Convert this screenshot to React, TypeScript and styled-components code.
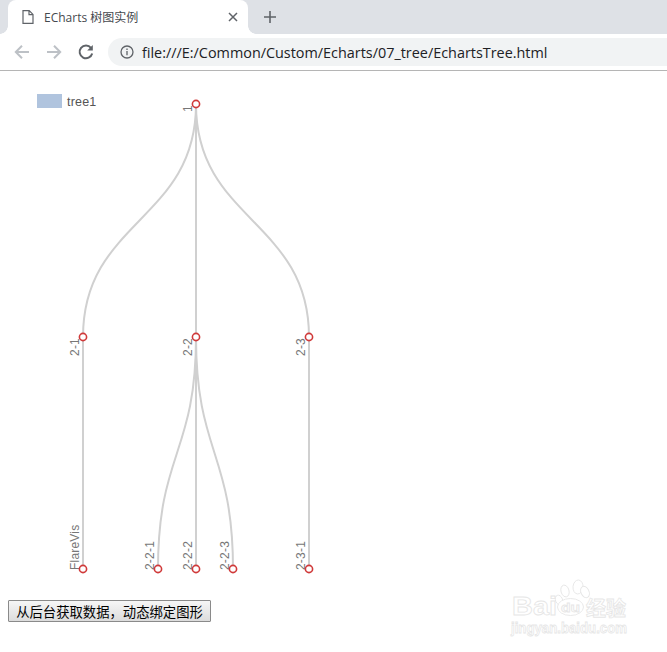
import styled, { createGlobalStyle } from "styled-components"

const GlobalStyle = createGlobalStyle`
    html, body {
        margin: 0;
        padding: 0;
        background: #fff;
        overflow: hidden;
    }
`

const tabFont = `"Open Sans", "Noto Sans CJK SC", sans-serif`

const Window = styled.div`
    position: relative;
    width: 667px;
    height: 652px;
    overflow: hidden;
    background: #fff;
`

const TabStrip = styled.div`
    display: flex;
    align-items: flex-end;
    height: 34px;
    padding-left: 8px;
    background: #dee1e6;
`

const Tab = styled.div`
    position: relative;
    display: flex;
    align-items: center;
    width: 240px;
    height: 34px;
    box-sizing: border-box;
    padding: 0 10px 0 14px;
    background: #fff;
    border-radius: 8px 8px 0 0;

    &::before,
    &::after {
        content: "";
        position: absolute;
        bottom: 0;
        width: 8px;
        height: 8px;
    }

    &::before {
        left: -8px;
        background: radial-gradient(circle at 0 0, #dee1e6 7.5px, #fff 8px);
    }

    &::after {
        right: -8px;
        background: radial-gradient(circle at 100% 0, #dee1e6 7.5px, #fff 8px);
    }
`

const TabTitle = styled.span`
    flex: 1;
    margin-left: 10px;
    font: 12px ${tabFont};
    color: #45494e;
`

const NewTab = styled.button`
    display: flex;
    padding: 0;
    margin: 0 0 11px 16px;
    border: 0;
    background: none;
`

const Toolbar = styled.div`
    display: flex;
    align-items: center;
    height: 37px;
    box-sizing: border-box;
    padding: 0 0 0 13px;
    gap: 14px;
    background: #fff;
    border-bottom: 1px solid #b5b5b5;
`

const NavButton = styled.span`
    display: flex;
    width: 18px;
    height: 18px;
`

const AddressBar = styled.div`
    display: flex;
    flex: 1;
    align-items: center;
    height: 28px;
    margin-left: -1px;
    padding-left: 12px;
    gap: 8px;
    background: #f1f3f4;
    border-radius: 14px 0 0 14px;
`

const Url = styled.span`
    font: 14.4px ${tabFont};
    color: #202124;
`

const Page = styled.main`
    display: flex;
    flex-direction: column;
    align-items: flex-start;
`

const Chart = styled.svg`
    display: block;
    width: 667px;
    height: 529px;
`

const NodeLabel = styled.text`
    font: 12px "Liberation Sans", sans-serif;
    letter-spacing: 0.2px;
    fill: #777;
`

const LegendLabel = styled.text`
    font: 12.5px "Liberation Sans", sans-serif;
    letter-spacing: 0.2px;
    fill: #555;
`

const ActionButton = styled.button`
    width: 203px;
    height: 22px;
    margin-left: 8px;
    padding: 0;
    font: 13.33px "Noto Sans CJK SC", sans-serif;
    color: #000;
    background: linear-gradient(#f6f6f6, #dcdcdc);
    border: 1px solid #8a8a8a;
    border-radius: 1px;
    white-space: nowrap;
`

const Watermark = styled.svg`
    position: absolute;
    left: 505px;
    top: 576px;
    width: 150px;
    height: 70px;
`

const WatermarkText = styled.text`
    font-family: "Liberation Sans", "Noto Sans CJK SC", sans-serif;
    fill: #fff;
    stroke: #e6e6e6;
    stroke-width: 0.8px;
`

type TreeNode = { x: number; y: number; label: string; leaf?: boolean }

// node centres in chart coordinates (chart starts 71px from the top)
const nodes: TreeNode[] = [
    { x: 196, y: 33, label: "1" },
    { x: 83, y: 266, label: "2-1" },
    { x: 196, y: 266, label: "2-2" },
    { x: 309, y: 266, label: "2-3" },
    { x: 83, y: 498, label: "FlareVis", leaf: true },
    { x: 158, y: 498, label: "2-2-1", leaf: true },
    { x: 196, y: 498, label: "2-2-2", leaf: true },
    { x: 233, y: 498, label: "2-2-3", leaf: true },
    { x: 309, y: 498, label: "2-3-1", leaf: true }
]

const links: [number, number][] = [
    [0, 1],
    [0, 2],
    [0, 3],
    [1, 4],
    [2, 5],
    [2, 6],
    [2, 7],
    [3, 8]
]

const linkPath = (a: TreeNode, b: TreeNode) => {
    const mid = (a.y + b.y) / 2
    return `M${a.x} ${a.y}C${a.x} ${mid} ${b.x} ${mid} ${b.x} ${b.y}`
}

export default function App() {
    return (
        <Window>
            <GlobalStyle />
            <TabStrip>
                <Tab>
                    <svg width="12" height="14" viewBox="0 0 12 14" fill="none" stroke="#5f6368" strokeWidth="1.2">
                        <path d="M1 .6h6.2L11 4.4v9H1zM7 .6v4h4" />
                    </svg>
                    <TabTitle>ECharts 树图实例</TabTitle>
                    <svg width="10" height="10" viewBox="0 0 10 10" stroke="#5f6368" strokeWidth="1.5">
                        <path d="M1 1l8 8M9 1l-8 8" />
                    </svg>
                </Tab>
                <NewTab aria-label="new tab">
                    <svg width="12" height="12" viewBox="0 0 12 12" stroke="#5f6368" strokeWidth="1.6">
                        <path d="M6 0v12M0 6h12" />
                    </svg>
                </NewTab>
            </TabStrip>
            <Toolbar>
                <NavButton>
                    <svg width="18" height="18" viewBox="0 0 18 18" fill="none" stroke="#bdc1c6" strokeWidth="2">
                        <path d="M16 9H3M9 2.8L2.8 9 9 15.2" />
                    </svg>
                </NavButton>
                <NavButton>
                    <svg width="18" height="18" viewBox="0 0 18 18" fill="none" stroke="#bdc1c6" strokeWidth="2">
                        <path d="M2 9h13M9 2.8L15.2 9 9 15.2" />
                    </svg>
                </NavButton>
                <NavButton>
                    <svg width="18" height="18" viewBox="0 0 18 18" fill="none" stroke="#5f6368" strokeWidth="2">
                        <path d="M14 4.8A6.4 6.4 0 1 0 15.2 10.5" />
                        <path d="M15.8 2v5.6h-5.6z" fill="#5f6368" stroke="none" />
                    </svg>
                </NavButton>
                <AddressBar>
                    <svg width="14" height="14" viewBox="0 0 14 14" fill="none" stroke="#5f6368" strokeWidth="1.3">
                        <circle cx="7" cy="7" r="6" />
                        <path d="M7 6v4.2M7 3.6v1.3" />
                    </svg>
                    <Url>file:///E:/Common/Custom/Echarts/07_tree/EchartsTree.html</Url>
                </AddressBar>
            </Toolbar>
            <Page>
                <Chart viewBox="0 0 667 529">
                    <rect x="37" y="23" width="25" height="14" fill="#b0c4de" />
                    <LegendLabel x="67" y="35">tree1</LegendLabel>
                    {links.map(([from, to]) => (
                        <path
                            key={`link-${from}-${to}`}
                            d={linkPath(nodes[from], nodes[to])}
                            fill="none"
                            stroke="#d0d0d0"
                            strokeWidth="2"
                        />
                    ))}
                    {nodes.map((n) => (
                        <g key={`node-${n.label}`}>
                            <NodeLabel
                                textAnchor={n.leaf ? "start" : "end"}
                                transform={`translate(${n.x - 4} ${n.y + 1}) rotate(-90)`}
                            >
                                {n.label}
                            </NodeLabel>
                            <circle cx={n.x} cy={n.y} r="3.6" fill="#fff" stroke="#d03a3a" strokeWidth="1.6" />
                        </g>
                    ))}
                </Chart>
                <ActionButton>从后台获取数据，动态绑定图形</ActionButton>
            </Page>
            <Watermark viewBox="0 0 150 70">
                <WatermarkText x="7" y="39" fontSize="25" fontWeight="700" textLength="45" lengthAdjust="spacingAndGlyphs">
                    Bai
                </WatermarkText>
                <g fill="#fff" stroke="#e6e6e6" strokeWidth="0.9">
                    <ellipse cx="60" cy="15" rx="4" ry="6" transform="rotate(-15 60 15)" />
                    <ellipse cx="73" cy="11" rx="5" ry="7" transform="rotate(5 73 11)" />
                    <ellipse cx="80" cy="16" rx="4" ry="6" transform="rotate(-25 80 16)" />
                    <ellipse cx="54" cy="24" rx="3.5" ry="5" transform="rotate(-20 54 24)" />
                    <ellipse cx="65.5" cy="31" rx="13" ry="8.5" />
                </g>
                <WatermarkText x="56" y="36" fontSize="13" fontWeight="700" textLength="19" lengthAdjust="spacingAndGlyphs">
                    du
                </WatermarkText>
                <WatermarkText x="81" y="40" fontSize="20" fontWeight="700">
                    经验
                </WatermarkText>
                <WatermarkText x="6" y="57" fontSize="15" fontWeight="700" textLength="116" lengthAdjust="spacingAndGlyphs">
                    jingyan.baidu.com
                </WatermarkText>
            </Watermark>
        </Window>
    )
}
